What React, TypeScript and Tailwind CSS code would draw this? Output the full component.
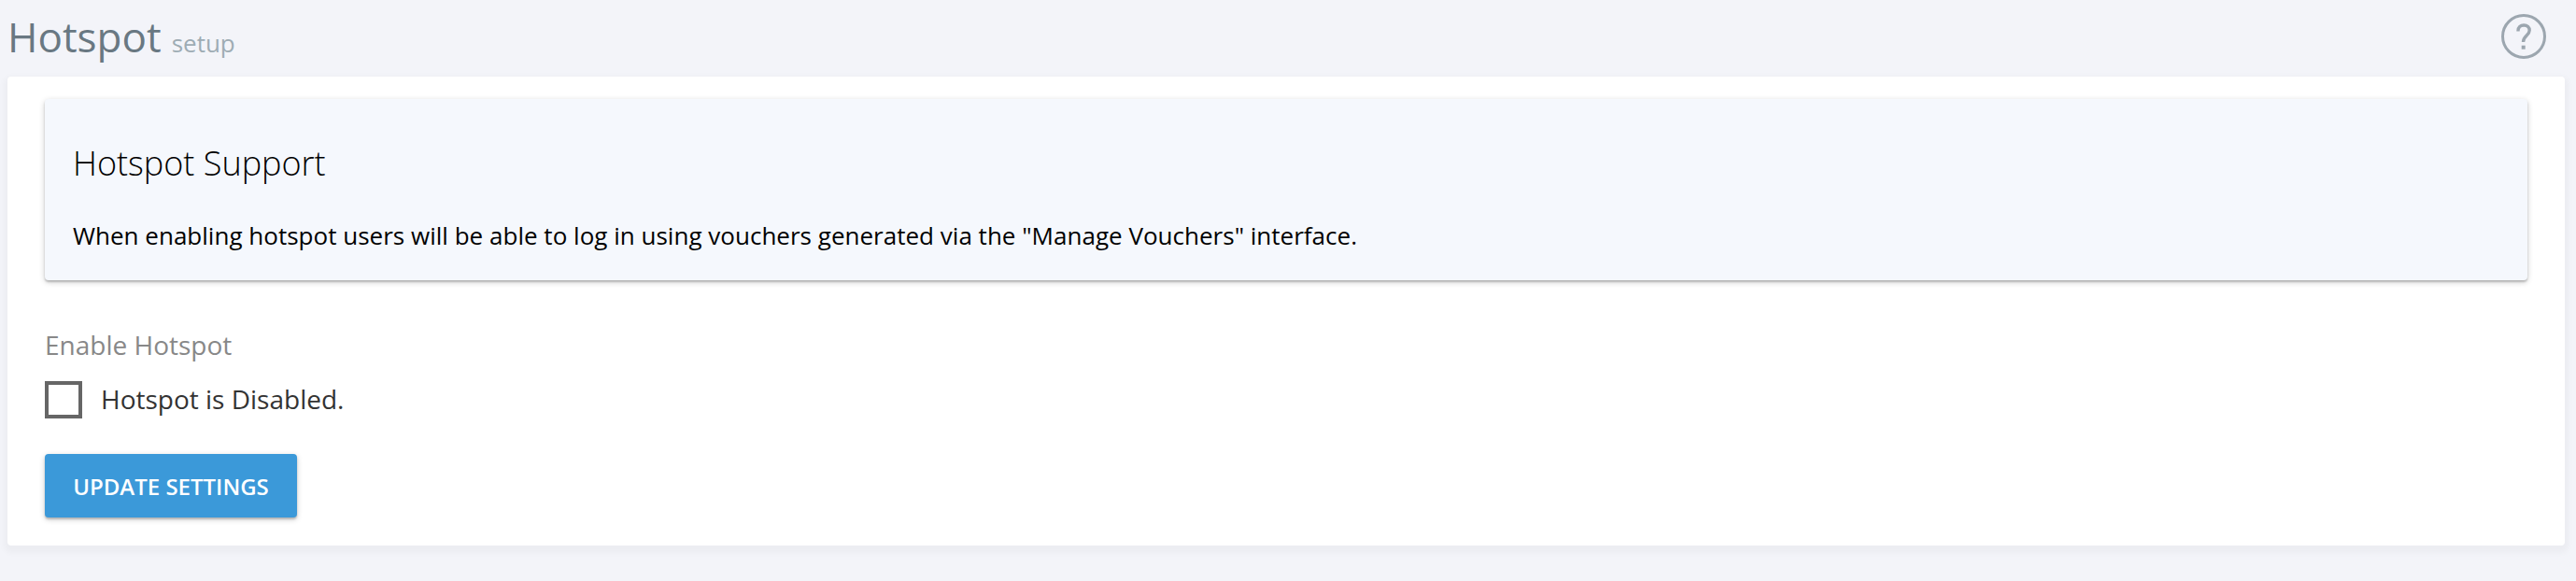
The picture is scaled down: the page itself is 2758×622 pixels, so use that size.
import { useState } from 'react';

const PageHeader = () => (
  <header className="flex h-[82px] items-start justify-between pl-2 pr-8">
    <h1 className="flex items-baseline gap-[11px] pt-[9px] text-[44px] leading-[60px] text-[#697882]">
      Hotspot <small className="text-[26px] text-[#9eacb4]">setup</small>
    </h1>
    <svg className="mt-[15px] size-12" viewBox="0 0 48 48" fill="none" stroke="#9ca6af" strokeWidth="3">
      <circle cx="24" cy="24" r="22.5" />
      <path strokeWidth="3.4" d="M18 18.5V18c0-4 2.5-6 6.2-6s6 2.3 6 5.5c0 5.5-6.7 5.5-6.7 12.5" />
      <path strokeWidth="4" d="M23.7 33.7v4" />
    </svg>
  </header>
);

export default function App() {
  const [enabled, setEnabled] = useState(false);

  return (
    <div className="h-[622px] bg-[#f3f4f9] font-['Open_Sans',sans-serif]">
      <PageHeader />
      <main className="ml-2 mr-3 h-[502px] rounded bg-white px-10 pt-6 shadow-[0_4px_6px_4px_rgba(0,0,0,0.03)]">
        <section className="h-[194px] rounded bg-[#f5f8fd] px-[30px] pt-11 shadow-[0_2px_6px_rgba(0,0,0,0.2),0_2px_2px_rgba(0,0,0,0.18)]">
          <h2 className="text-[36px] font-light leading-[50px] text-black">Hotspot Support</h2>
          <p className="mt-8 text-[26px] leading-[40px] tracking-[0.015px] text-black">
            When enabling hotspot users will be able to log in using vouchers generated via the "Manage Vouchers" interface.
          </p>
        </section>
        <p className="mt-[49px] text-[28px] leading-[40px] text-[#888888]">Enable Hotspot</p>
        <label className="mt-[19px] flex h-10 items-center gap-5 text-[28px] text-[#333333]">
          <input
            type="checkbox"
            checked={enabled}
            onChange={() => setEnabled(!enabled)}
            className="size-10 appearance-none border-4 border-[#666666]"
          />
          <span className="pb-0.5">Hotspot is {enabled ? 'Enabled' : 'Disabled'}.</span>
        </label>
        <button className="mt-[38px] h-[68px] w-[270px] rounded bg-[#3b99d9] pt-px text-[24px] font-semibold text-white shadow-[0_2px_6px_rgba(0,0,0,0.2),0_2px_2px_rgba(0,0,0,0.18)]">
          UPDATE SETTINGS
        </button>
      </main>
    </div>
  );
}
